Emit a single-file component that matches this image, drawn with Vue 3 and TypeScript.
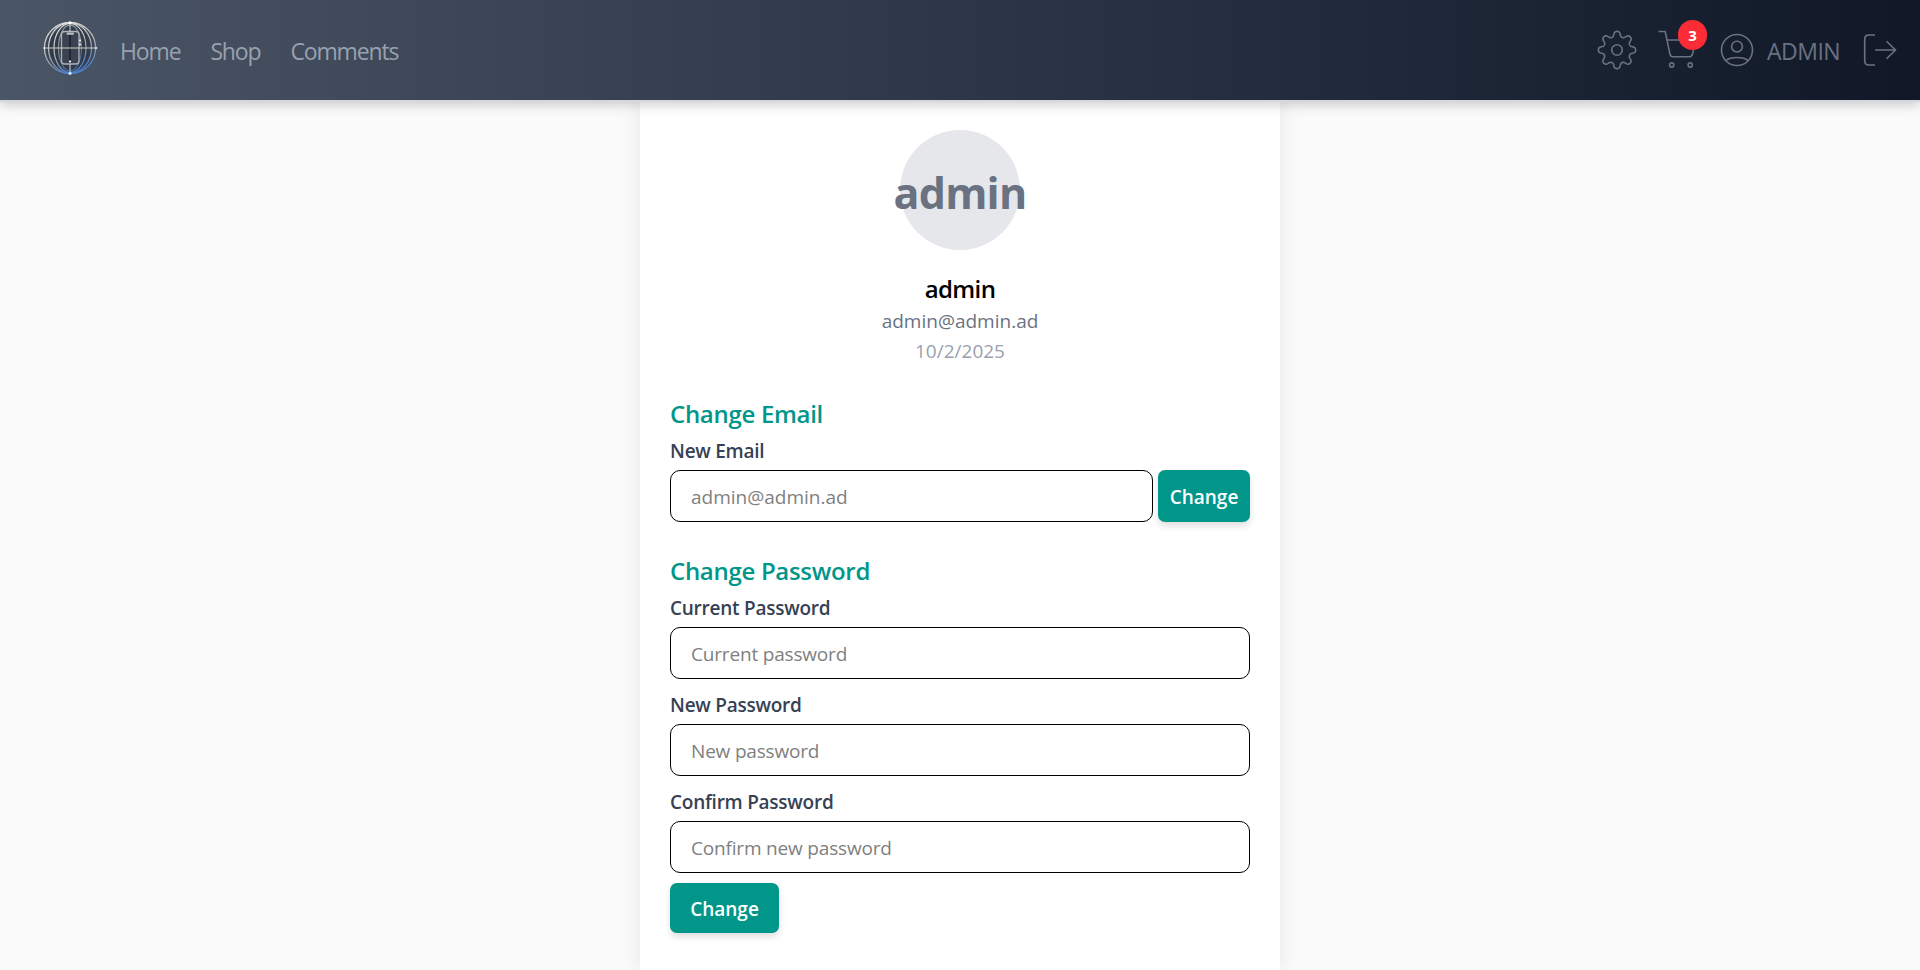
<script setup lang="ts">
import { ref } from 'vue'

interface Field {
  label: string
  placeholder: string
}

const user = { name: 'admin', email: 'admin@admin.ad', joined: '10/2/2025' }
const cartCount = ref<number>(3)
const links: string[] = ['Home', 'Shop', 'Comments']
const fields: Field[] = [
  { label: 'Current Password', placeholder: 'Current password' },
  { label: 'New Password', placeholder: 'New password' },
  { label: 'Confirm Password', placeholder: 'Confirm new password' },
]

// Outline of an eight-toothed gear with rounded teeth
const gearPath: string =
  Array.from({ length: 240 }, (_, i) => {
    const a = (i / 240) * Math.PI * 2
    const w = Math.cos(8 * a)
    const r = 16.1 + 2.5 * Math.tanh(1.5 * w) / Math.tanh(1.5)
    return `${i ? 'L' : 'M'}${(20 + r * Math.cos(a)).toFixed(2)} ${(20 + r * Math.sin(a)).toFixed(2)}`
  }).join('') + 'Z'
</script>

<template>
  <div class="page">
    <header class="nav">
      <svg class="logo" viewBox="0 0 60 60" fill="none">
        <defs>
          <linearGradient id="metal" x1="0" y1="0" x2="0.35" y2="1">
            <stop offset="0" stop-color="#f1f0e8" />
            <stop offset="0.55" stop-color="#b9b8b5" />
            <stop offset="0.82" stop-color="#8394b0" />
            <stop offset="1" stop-color="#4f83cf" />
          </linearGradient>
          <radialGradient id="globe">
            <stop offset="0" stop-color="#303846" />
            <stop offset="0.75" stop-color="#313a4a" />
            <stop offset="1" stop-color="#434f62" />
          </radialGradient>
        </defs>
        <circle cx="30" cy="30" r="26" fill="url(#globe)" />
        <g stroke="url(#metal)" stroke-width="1.2">
          <circle cx="30" cy="30" r="25.6" stroke-width="1.3" />
          <ellipse cx="30" cy="30" rx="21.5" ry="25.2" />
          <ellipse cx="30" cy="30" rx="16" ry="24.5" />
          <ellipse cx="30" cy="30" rx="11.5" ry="23" stroke-opacity="0.6" />
        </g>
        <rect x="21.5" y="13.5" width="17.5" height="32.5" rx="3" fill="#3a4352" stroke="#aeb2b8" stroke-width="1.3" />
        <rect x="26.5" y="14.5" width="7.5" height="2.2" rx="1" fill="#b9bcc0" />
        <path d="M30 4v10M30 46v10" stroke="#cbd2dc" stroke-width="1" />
        <path d="M30 17v25" stroke="#161c27" stroke-width="1.4" />
        <path d="M4 30h52" stroke="#cfd0c6" stroke-width="1" />
        <path d="M40 21.5v2M40 25.5v2" stroke="#f4f1e8" stroke-width="1.8" />
        <circle cx="30" cy="43.5" r="1.1" fill="#fff" />
        <circle cx="30" cy="4.7" r="1.5" fill="#fff" />
        <circle cx="4.3" cy="30" r="1" fill="#e0f0ff" />
        <circle cx="56" cy="30" r="1.3" fill="#b8d9ff" />
        <circle cx="30" cy="55.3" r="1.6" fill="#c9e4ff" />
      </svg>
      <nav class="links">
        <a v-for="link in links" :key="link" class="link">{{ link }}</a>
      </nav>
      <div class="tools">
        <svg class="icon gear" viewBox="0 0 40 40">
          <path :d="gearPath" />
          <circle cx="20" cy="20" r="5.3" />
        </svg>
        <div class="cart">
          <svg class="icon" viewBox="0 0 40 40">
            <path d="M0.500 1.500h6.700L12 24.300c0.500 1.800 1.400 2.500 3 2.500h16.200c1.700 0 2.800-0.800 3.300-2.500L37.600 10H8.900" />
            <circle cx="13.700" cy="35" r="2.100" />
            <circle cx="32.200" cy="35" r="2.100" />
          </svg>
          <span class="badge">{{ cartCount }}</span>
        </div>
        <svg class="icon user" viewBox="0 0 40 40">
          <circle cx="20" cy="20" r="15.5" />
          <circle cx="20" cy="16.6" r="5.4" />
          <path d="M8.800 30.600c2.600-2.100 6.800-3.100 11.200-3.100s8.600 1 11.200 3.100" />
        </svg>
        <span class="account">ADMIN</span>
        <svg class="icon exit" viewBox="0 0 40 40">
          <path d="M15 5H9C6.500 5 4.700 6.800 4.700 9.300V30.700C4.700 33.200 6.500 35 9 35h6M15 20h20.500M26.500 11.200l9 8.800l-9 8.800" />
        </svg>
      </div>
    </header>

    <main class="card">
      <div class="avatar"><span>{{ user.name }}</span></div>
      <h1 class="name">{{ user.name }}</h1>
      <p class="email">{{ user.email }}</p>
      <p class="date">{{ user.joined }}</p>

      <section class="section">
        <h2>Change Email</h2>
        <label class="label">New Email</label>
        <div class="row">
          <input class="input" type="email" :placeholder="user.email" />
          <button class="button small">Change</button>
        </div>
      </section>

      <section class="section">
        <h2>Change Password</h2>
        <div v-for="field in fields" :key="field.label" class="field">
          <label class="label">{{ field.label }}</label>
          <input class="input" type="password" :placeholder="field.placeholder" />
        </div>
        <button class="button">Change</button>
      </section>
    </main>
  </div>
</template>

<style>
body {
  margin: 0;
  overflow: hidden;
}
</style>

<style scoped>
.page {
  height: 970px;
  overflow: hidden;
  background: #fafafa;
  font-family: "Open Sans", "Noto Sans", sans-serif;
  font-size: 19px;
  display: flex;
  flex-direction: column;
  align-items: center;
}
.nav {
  position: relative;
  z-index: 1;
  flex: none;
  box-sizing: border-box;
  width: 100%;
  height: 100px;
  padding: 0 20px 0 40px;
  display: flex;
  align-items: center;
  background: linear-gradient(to right, #4a5565, #101828);
  box-shadow: 0 2px 0 #d6d7dc, 0 4px 12px rgba(0, 0, 0, 0.22);
}
.logo {
  width: 60px;
  height: 60px;
  margin-bottom: 5px;
}
.links {
  display: flex;
  gap: 30px;
  margin-left: 20px;
}
.link,
.account {
  padding-top: 2px;
  font-size: 23px;
  line-height: 36px;
  color: #99a1af;
}
.link {
  letter-spacing: -1.15px;
}
.icon {
  display: block;
  width: 40px;
  height: 40px;
  overflow: visible;
  fill: none;
  stroke: #6a7282;
  stroke-width: 1.6;
}
.tools {
  margin-left: auto;
  display: flex;
  align-items: center;
}
.cart {
  position: relative;
  margin-left: 21px;
}
.badge {
  position: absolute;
  left: 20px;
  top: -10px;
  width: 29px;
  height: 30px;
  border-radius: 15px;
  background: #fb2c36;
  color: #fff;
  font-size: 15px;
  font-weight: 700;
  line-height: 31px;
  text-align: center;
}
.user {
  margin-left: 19px;
}
.account {
  width: 73px;
  margin-left: 10px;
  letter-spacing: -0.5px;
  color: #6a7282;
}
.exit {
  margin-left: 20px;
}
.card {
  box-sizing: border-box;
  width: 640px;
  flex: 1;
  padding: 30px;
  display: flex;
  flex-direction: column;
  background: #fff;
  box-shadow: 0 0 20px rgba(0, 0, 0, 0.08);
}
.avatar {
  flex: none;
  align-self: center;
  width: 120px;
  height: 120px;
  border-radius: 50%;
  background: #e5e7eb;
  color: #6a7282;
  font-size: 43px;
  font-weight: 700;
  letter-spacing: -0.8px;
  line-height: 126px;
  display: flex;
  justify-content: center;
}
.name,
.email,
.date {
  margin: 0;
  text-align: center;
}
.name {
  margin-top: 21px;
  font-size: 24px;
  font-weight: 600;
  letter-spacing: -0.6px;
  line-height: 36px;
}
.email,
.date {
  line-height: 30px;
  color: #6a7282;
}
.email {
  margin-top: -1px;
}
.date {
  color: #99a1af;
}
.section {
  margin-top: 30px;
}
.section + .section {
  margin-top: 31px;
}
h2 {
  margin: 0 0 4px;
  font-size: 24px;
  font-weight: 600;
  letter-spacing: -0.3px;
  line-height: 36px;
  color: #009689;
}
.label {
  display: block;
  margin-bottom: 4px;
  font-weight: 600;
  letter-spacing: -0.25px;
  line-height: 30px;
  color: #364153;
}
.row {
  display: flex;
  gap: 5px;
}
.field {
  margin-bottom: 11px;
}
.field:last-of-type {
  margin-bottom: 10px;
}
.input {
  display: block;
  box-sizing: border-box;
  width: 100%;
  height: 52px;
  padding: 2px 20px 0;
  border: 1px solid #000;
  border-radius: 10px;
  background: #fff;
  font: inherit;
  outline: none;
}
.field .input {
  letter-spacing: -0.18px;
}
.input::placeholder {
  color: #808080;
  opacity: 1;
}
.button {
  flex: none;
  display: block;
  width: 109px;
  height: 50px;
  padding: 2px 0 0;
  border: 0;
  border-radius: 7px;
  background: #009689;
  color: #fff;
  font: inherit;
  font-weight: 600;
  box-shadow: 0 4px 7px rgba(0, 0, 0, 0.13);
}
.small {
  width: 92px;
  height: 52px;
}
</style>
